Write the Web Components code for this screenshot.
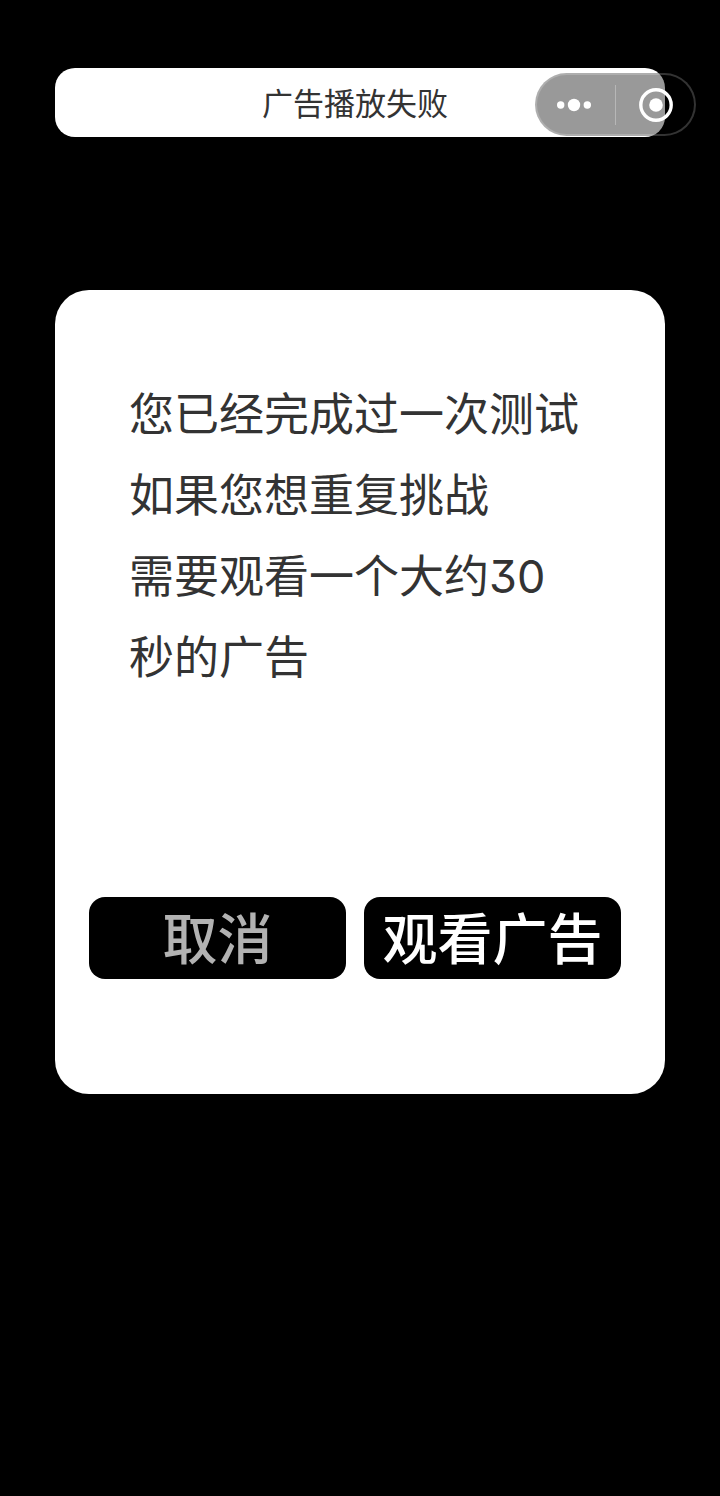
<!DOCTYPE html>
<html lang="zh-CN">
<head>
<meta charset="utf-8">
<meta name="viewport" content="width=device-width, initial-scale=1">
<title>广告播放失败</title>
<style>
    body {
        margin: 0;
        min-height: 100vh;
        background: #000;
        color: #333;
        font-family: Inter, "Noto Sans CJK SC", sans-serif;
    }
</style>
</head>
<body>
<ad-page>
    <title-bar slot="header">广告播放失败</title-bar>
    <capsule-menu slot="menu"></capsule-menu>
    <dialog-card>
        您已经完成过一次测试<br>如果您想重复挑战<br>需要观看一个大约30<br>秒的广告
        <action-button slot="actions" muted>取消</action-button>
        <action-button slot="actions">观看广告</action-button>
    </dialog-card>
</ad-page>

<script>
class AdPage extends HTMLElement {
    connectedCallback() {
        this.attachShadow({ mode: 'open' });
        this.shadowRoot.innerHTML = `
            <style>
                :host {
                    display: block;
                    position: relative;
                    padding: 68px 55px;
                }

                header {
                    margin-bottom: 153px;
                }

                .menu {
                    position: absolute;
                    top: 73px;
                    right: 24px;
                }
            </style>
            <header><slot name="header"></slot></header>
            <div class="menu"><slot name="menu"></slot></div>
            <main><slot></slot></main>
        `;
    }
}

class TitleBar extends HTMLElement {
    connectedCallback() {
        this.attachShadow({ mode: 'open' });
        this.shadowRoot.innerHTML = `
            <style>
                :host {
                    display: block;
                    padding: 13px 10px 11px 0;
                    border-radius: 20px;
                    background: #fff;
                }

                h1 {
                    margin: 0;
                    font-size: 31px;
                    font-weight: 400;
                    line-height: 45px;
                    text-align: center;
                }
            </style>
            <h1><slot></slot></h1>
        `;
    }
}

class CapsuleMenu extends HTMLElement {
    connectedCallback() {
        this.attachShadow({ mode: 'open' });
        this.shadowRoot.innerHTML = `
            <style>
                :host {
                    display: flex;
                    align-items: center;
                    box-sizing: border-box;
                    width: 161px;
                    height: 63px;
                    border: 2px solid rgba(255, 255, 255, 0.2);
                    border-radius: 32px;
                    background: rgba(0, 0, 0, 0.4);
                }

                button {
                    display: flex;
                    flex: 1;
                    align-items: center;
                    justify-content: center;
                    height: 100%;
                    padding: 0;
                    border: 0;
                    background: none;
                    cursor: pointer;
                }

                .divider {
                    width: 1px;
                    height: 40px;
                    background: rgba(255, 255, 255, 0.3);
                }

                svg {
                    display: block;
                    fill: #fff;
                }
            </style>
            <button type="button" aria-label="更多">
                <svg width="40" height="36" viewBox="0 0 40 36">
                    <circle cx="4.7" cy="18" r="3.7"/>
                    <circle cx="18" cy="18" r="6.2"/>
                    <circle cx="31.3" cy="18" r="3.7"/>
                </svg>
            </button>
            <span class="divider"></span>
            <button type="button" aria-label="关闭">
                <svg width="36" height="36" viewBox="0 0 36 36">
                    <circle cx="19" cy="18" r="15.2" fill="none" stroke="#fff" stroke-width="3.4"/>
                    <circle cx="19" cy="18" r="6.8"/>
                </svg>
            </button>
        `;
    }
}

class DialogCard extends HTMLElement {
    connectedCallback() {
        this.attachShadow({ mode: 'open' });
        this.shadowRoot.innerHTML = `
            <style>
                :host {
                    display: block;
                    padding: 84px 44px 115px 34px;
                    border-radius: 34px;
                    background: #fff;
                }

                p {
                    margin: 0 0 199px;
                    padding-left: 40px;
                    font-size: 45px;
                    line-height: 81px;
                    /* flat-topped 3 */
                    font-feature-settings: "cv09";
                }

                .actions {
                    display: grid;
                    grid-template-columns: 1fr 1fr;
                    gap: 18px;
                }
            </style>
            <p><slot></slot></p>
            <div class="actions"><slot name="actions"></slot></div>
        `;
    }
}

class ActionButton extends HTMLElement {
    connectedCallback() {
        const color = this.hasAttribute('muted') ? '#b2b2b2' : '#fff';
        this.attachShadow({ mode: 'open' });
        this.shadowRoot.innerHTML = `
            <style>
                :host {
                    display: block;
                }

                button {
                    display: block;
                    width: 100%;
                    padding: 2px 0 0;
                    border: 0;
                    border-radius: 16px;
                    background: #000;
                    color: ${color};
                    font-family: inherit;
                    font-size: 55px;
                    font-weight: 500;
                    line-height: 80px;
                    white-space: nowrap;
                    cursor: pointer;
                }
            </style>
            <button type="button"><slot></slot></button>
        `;
    }
}

customElements.define('ad-page', AdPage);
customElements.define('title-bar', TitleBar);
customElements.define('capsule-menu', CapsuleMenu);
customElements.define('dialog-card', DialogCard);
customElements.define('action-button', ActionButton);
</script>
</body>
</html>
